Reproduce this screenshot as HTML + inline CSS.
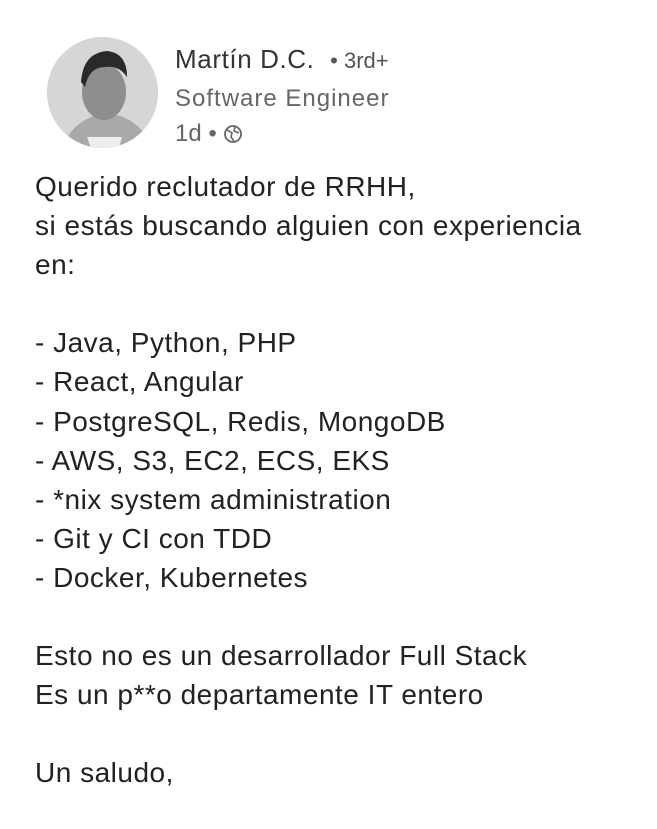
<!DOCTYPE html>
<html><head><meta charset="utf-8"><style>
html,body{margin:0;padding:0;background:#fff;width:657px;height:829px;overflow:hidden}
body{font-family:"Liberation Sans",sans-serif;position:relative;color:#262626}
.av{position:absolute;left:47px;top:37px;width:111px;height:111px;border-radius:50%;background:#d9d9d9;overflow:hidden}
.t{position:absolute;left:175px;white-space:nowrap}
.body{position:absolute;left:35px;top:167px;font-size:28px;letter-spacing:0.5px;line-height:39.1px;white-space:pre;color:#222}
</style></head><body>
<div class="av">
<svg width="111" height="111" viewBox="0 0 111 111">
<rect width="111" height="111" fill="#d6d6d6"/>
<path d="M15 111 Q25 85 50 78 L70 78 Q95 85 105 111Z" fill="#a9a9a9"/>
<path d="M40 100 L75 100 L72 111 L44 111Z" fill="#eee"/>
<ellipse cx="57" cy="55" rx="22" ry="28" fill="#8e8e8e"/>
<path d="M34 45 Q36 16 60 14 Q80 16 80 40 Q72 28 58 30 Q42 30 38 50Z" fill="#2a2a2a"/>
</svg></div>
<div class="t" style="top:44px;font-size:26px;letter-spacing:0.6px;color:#333">Martín D.C. &nbsp;<span style="font-size:22px;color:#555;letter-spacing:0">• 3rd+</span></div>
<div class="t" style="top:85px;font-size:24px;letter-spacing:1px;color:#666">Software Engineer</div>
<div class="t" style="top:120px;font-size:24px;color:#666">1d • <svg width="20" height="20" viewBox="0 0 20 20" style="vertical-align:-3px"><circle cx="10" cy="10" r="8" fill="none" stroke="#666" stroke-width="1.8"/><path d="M4 6 L9 9 L8 13 L11 17 M12 3 L11 7 L16 9" fill="none" stroke="#666" stroke-width="1.6"/></svg></div>
<div class="body">Querido reclutador de RRHH,
si estás buscando alguien con experiencia
en:

- Java, Python, PHP
- React, Angular
- PostgreSQL, Redis, MongoDB
- AWS, S3, EC2, ECS, EKS
- *nix system administration
- Git y CI con TDD
- Docker, Kubernetes

Esto no es un desarrollador Full Stack
Es un p**o departamente IT entero

Un saludo,</div>
</body></html>
